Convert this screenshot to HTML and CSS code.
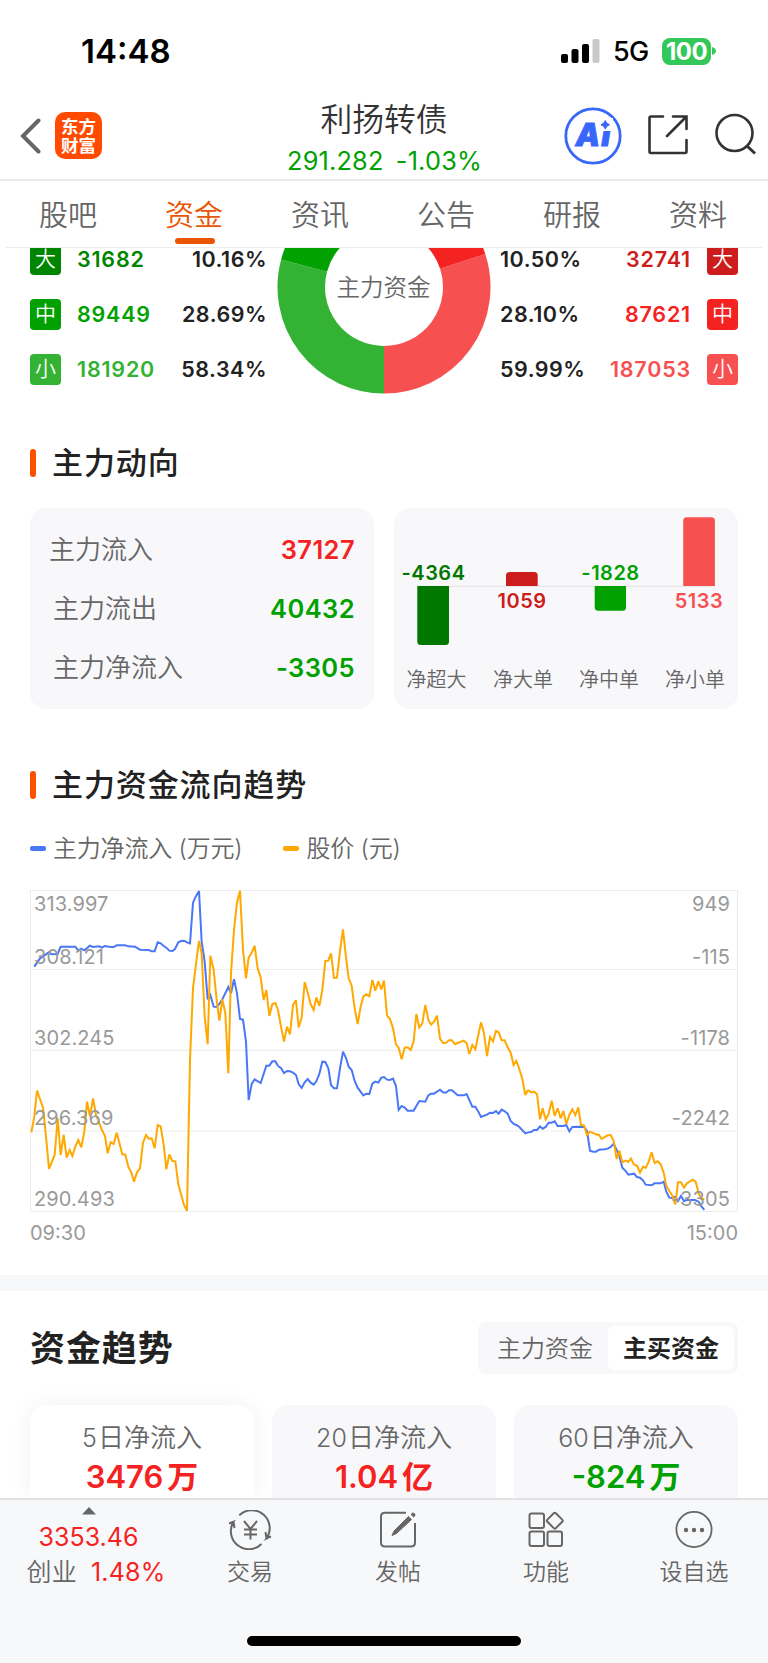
FILE: index.html
```html
<!DOCTYPE html>
<html lang="zh-CN">
<head>
<meta charset="utf-8">
<title>利扬转债 资金</title>
<link rel="stylesheet" href="styles.css">
</head>
<body>
<div class="screen">
  <div class="status">
    <span class="clock">14:48</span>
    <div class="status-right">
      <svg class="signal" width="39" height="24" viewBox="0 0 39 24"><rect x="0" y="15" width="7" height="9" rx="2"/><rect x="10.5" y="10" width="7" height="14" rx="2"/><rect x="21" y="5" width="7" height="19" rx="2"/><rect x="31.500" y="0" width="7" height="24" rx="2" fill="#c9c9c9"/></svg>
      <span class="net">5G</span>
      <span class="battery">100</span>
      <svg class="nub" width="4" height="8" viewBox="0 0 4 8"><path d="M0 0Q4 1.500 4 4T0 8Z" fill="#34c759"/></svg>
    </div>
  </div>

  <header class="header">
    <svg class="back" width="22" height="36" viewBox="0 0 22 36"><path d="M18.500 2.500 3 18l15.500 15.500" fill="none" stroke="#666" stroke-width="4" stroke-linecap="round"/></svg>
    <div class="logo"><span>东方</span><span>财富</span></div>
    <div class="title">
      <div class="name">利扬转债</div>
      <div class="quote"><span>291.282</span><span>-1.03%</span></div>
    </div>
    <div class="actions">
      <svg width="58" height="58" viewBox="0 0 58 58"><circle cx="29" cy="29" r="27.200" fill="none" stroke="#3867fb" stroke-width="2.800"/><text x="11.500" y="39" class="ai">Ai</text><rect x="35" y="11" width="14" height="13" fill="#fff"/><path d="M41.200 13.500Q42.200 16.800 45.500 17.800 42.200 18.800 41.200 22.100 40.200 18.800 36.900 17.800 40.200 16.800 41.200 13.500Z" fill="#3867fb" stroke="#3867fb"/></svg>
      <svg class="share" width="42" height="42" viewBox="0 0 42 42"><path d="M16 2.500H4Q2.500 2.500 2.500 4V37.500Q2.500 39 4 39H38Q39.500 39 39.500 37.500V26M26 2.500H39.500V15M39 3 20 22" fill="none" stroke="#333" stroke-width="2.600" stroke-linecap="round"/></svg>
      <svg class="find" width="42" height="42" viewBox="0 0 42 42"><circle cx="19.500" cy="20" r="18" fill="none" stroke="#333" stroke-width="2.600"/><path d="m31.500 32.500 8.500 8" stroke="#333" stroke-width="3"/></svg>
    </div>
  </header>

  <nav class="tabs">
    <span>股吧</span><span class="on">资金</span><span>资讯</span><span>公告</span><span>研报</span><span>资料</span>
  </nav>

  <section class="flow">
    <div class="orders">
      <i class="tag g1">大</i><b class="t-g1">31682</b><em>10.16%</em>
      <i class="tag g2">中</i><b class="t-g2">89449</b><em>28.69%</em>
      <i class="tag g3">小</i><b class="t-g3">181920</b><em>58.34%</em>
    </div>
    <svg class="donut" width="214" height="147" viewBox="-107 -39 214 147">
      <g fill="none" stroke-width="47.500">
        <path d="M0 82.750A82.750 82.750 0 0 1 -79.930 -21.420" stroke="#33b233"/>
        <path d="M-79.930 -21.420A82.750 82.750 0 0 1 -32.860 -75.940" stroke="#00a100"/>
        <path d="M0 82.750A82.750 82.750 0 0 0 78.700 -25.570" stroke="#f75050"/>
        <path d="M78.700 -25.570A82.750 82.750 0 0 0 30 -77.100" stroke="#f52222"/>
      </g>
      <text x="-.5" y="8.500" text-anchor="middle" class="donut-label">主力资金</text>
    </svg>
    <div class="orders right">
      <em>10.50%</em><b class="t-r1">32741</b><i class="tag r1">大</i>
      <em>28.10%</em><b class="t-r2">87621</b><i class="tag r2">中</i>
      <em>59.99%</em><b class="t-r3">187053</b><i class="tag r3">小</i>
    </div>
  </section>

  <h2 class="sec"><span>主力动向</span></h2>
  <div class="cards">
    <div class="card sums">
      <div class="first"><span>主力流入</span><b class="t-r2">37127</b></div>
      <div><span>主力流出</span><b class="t-g2">40432</b></div>
      <div><span>主力净流入</span><b class="t-g2">-3305</b></div>
    </div>
    <div class="card">
      <svg width="344" height="201" viewBox="0 0 344 201">
        <path d="M23 78.300H321" stroke="#e6e6e9" stroke-width="1.300"/>
        <path d="M23.300 78H55V133.500Q55 137 51.500 137H26.800Q23.300 137 23.300 133.500Z" fill="#007800"/>
        <path d="M112 78V67.500Q112 64 115.500 64H140.200Q143.700 64 143.700 67.500V78Z" fill="#cd1c1c"/>
        <path d="M200.700 78H232V99.300Q232 102.800 228.500 102.800H204.200Q200.700 102.800 200.700 99.300Z" fill="#00a100"/>
        <path d="M289.200 78V12.800Q289.200 9.300 292.700 9.300H317.400Q320.900 9.300 320.900 12.800V78Z" fill="#f75050"/>
        <g class="bar-num" text-anchor="middle">
          <text x="39.500" y="71.800" fill="#007800">-4364</text>
          <text x="128" y="99.500" fill="#cd1c1c">1059</text>
          <text x="216.500" y="71.800" fill="#00a100">-1828</text>
          <text x="305" y="99.500" fill="#f75050">5133</text>
        </g>
        <g class="bar-name" text-anchor="middle">
          <text x="42.500" y="179">净超大</text>
          <text x="129" y="179">净大单</text>
          <text x="215" y="179">净中单</text>
          <text x="301" y="179">净小单</text>
        </g>
      </svg>
    </div>
  </div>

  <h2 class="sec second"><span>主力资金流向趋势</span></h2>
  <div class="legend"><span class="blue"><u>主力净流入 (万元)</u></span><span class="orange"><u>股价 (元)</u></span></div>
  <svg class="chart" width="708" height="323" viewBox="0 0 708 323">
    <path d="M.5 .5H707.500V321.500H.5ZM0 79.500H708M0 160.300H708M0 241H708" fill="none" stroke="#ededee" stroke-width="1.200"/>
    <g transform="scale(.33333)" fill="none" stroke-width="6" stroke-linejoin="miter" stroke-miterlimit="3">
      <g stroke="#4a77f7">
        <polyline transform="translate(-30 -60)" points="43,290 60,265 87,247 95,253 113,252 122,230 166,230 175,242 184,236 193,241 210,227 219,231 237,229 246,233 254,228 272,231 281,231 290,226 316,226 325,229 345,230 360,239 387,240 395,244 404,244 413,217 422,220 431,228 439,233 448,242 457,243 465,237 475,217 483,213 492,212 501,217 510,220 519,98 527,80 537,63 545,215 554,275 563,388 571,375 581,410 590,411 598,402 607,388 625,351 633,370 642,328 651,370 660,447 669,449 678,515 686,690 695,642 704,628 722,639 739,587 748,587 757,574 766,574 774,588"/>
        <polyline transform="translate(720 -60)" points="24,588 33,594 42,609 51,603 60,604 69,608 78,615 86,642 95,654 104,637 113,627 122,638 131,644 139,634 148,612 157,575 166,576 175,595 183,645 192,655 201,655 210,595 219,545 228,564 236,590 245,600 254,633 263,653 280,676 289,671 298,672 307,641 316,635 325,638 334,623 342,621 351,629 360,630 369,626 378,648 386,720 395,708 404,713 413,722 431,722 439,708 448,693 466,695 475,676 483,671 492,671 510,659 519,667 528,668 537,661 546,661 563,676 581,676 590,672 607,710 616,710 625,725 633,741 651,734 660,728 669,729 678,723 686,731 695,719 704,724 713,731 722,753 731,762 739,765 748,771 766,790 774,787"/>
        <polyline transform="translate(1410 -60)" points="84,787 93,786 102,780 111,780 120,769 128,776 137,771 146,758 155,758 164,754 173,768 190,768 199,765 208,784 217,771 235,770 252,771 261,783 270,842 279,845 288,845 297,839 314,838 323,836 332,831 341,821 358,857 367,893 376,902 385,914 402,911 411,921 420,923 429,931 437,944 455,946 464,940 482,940 491,935 499,965 508,983 517,984 526,980 534,993 543,978 552,993 561,990 585,990 596,995 605,1010 613,1020"/>
      </g>
      <g stroke="#ffa800">
        <polyline transform="translate(-30 -60)" points="34,787 43,740 51,662 69,713 78,800 87,897 104,855 113,745 122,855 131,795 140,863 149,840 157,858 166,830 175,810 184,832 193,785 201,695 210,740 219,685 228,735 246,780 255,798 263,850 272,817 281,822 290,788 307,853 316,854 325,890 334,908 342,935 351,907 360,895 369,818 378,795 386,806 395,805 404,835 413,765 422,769 431,823 439,898 448,853 457,873 466,874 475,943 492,1005 501,1022 510,570 519,355 527,290 537,213 545,250 554,440 563,523 571,257 581,300 590,390 598,452 607,388 616,430 625,610 633,310 642,180 651,98 660,62 669,240 678,325 686,263 695,248 704,228 713,295 722,322 731,390 739,360 748,438 757,402 766,399 774,420"/>
        <polyline transform="translate(720 -60)" points="24,420 33,470 42,515 51,470 60,493 69,405 78,391 86,472 95,443 104,336 113,367 122,403 131,420 139,382 148,408 157,360 166,273 175,272 183,250 192,324 201,323 210,243 219,178 228,262 236,325 245,347 254,415 263,462 272,410 280,380 289,373 298,379 307,330 316,362 325,334 334,358 342,332 351,437 360,447 369,475 378,524 386,533 395,568 404,533 413,532 422,540 431,514 439,432 448,473 457,460 466,405 475,450 483,464 492,455 501,437 510,506 519,519 528,518 537,511 546,511 555,523 563,519 581,512 590,520 598,552 607,525 616,538 625,495 633,457 642,490 651,558 660,501 669,514 678,483 686,487 695,511 704,511 713,532 722,548 731,585 739,573 748,597 757,627 766,675 774,660"/>
        <polyline transform="translate(1410 -60)" points="84,660 93,667 102,665 111,672 120,748 128,715 137,748 146,732 155,692 164,738 173,715 182,745 190,723 199,762 208,735 217,718 226,735 235,712 243,765 252,766 261,795 270,785 288,793 297,795 305,807 323,796 332,795 341,812 350,867 358,842 367,877 376,872 385,876 393,866 402,884 411,887 420,908 429,890 437,894 446,875 455,847 464,879 473,874 482,883 491,908 499,948 517,977 526,1003 534,937 543,937 552,953 561,940 578,929 587,935 596,970 605,985 613,988"/>
      </g>
    </g>
    <g class="axis">
      <text x="4" y="20.500">313.997</text><text x="4" y="74">308.121</text><text x="4" y="154.500">302.245</text><text x="4" y="235">296.369</text><text x="4" y="315.500">290.493</text>
      <g text-anchor="end"><text x="700" y="20.500">949</text><text x="700" y="74">-115</text><text x="700" y="154.500">-1178</text><text x="700" y="235">-2242</text><text x="700" y="315.500">-3305</text></g>
    </g>
  </svg>
  <div class="times"><span>09:30</span><span>15:00</span></div>

  <div class="band"></div>

  <div class="trend-head">
    <h1>资金趋势</h1>
    <div class="toggle"><span>主力资金</span><span class="sel">主买资金</span></div>
  </div>
  <div class="periods">
    <div class="period active"><span><u>5</u>日净流入</span><b class="t-r2"><u>3476</u>万</b></div>
    <div class="period"><span><u>20</u>日净流入</span><b class="t-r2"><u>1.04</u>亿</b></div>
    <div class="period"><span><u>60</u>日净流入</span><b class="t-g2"><u>-824</u>万</b></div>
  </div>

  <footer class="bottom">
    <div class="bar">
      <div class="index">
        <svg width="14" height="8" viewBox="0 0 14 8"><path d="M7 0 14 7.500H0Z" fill="#666"/></svg>
        <div class="idx-val">3353.46</div>
        <div class="idx-row"><span>创业</span><span class="t-r2">1.48%</span></div>
      </div>
      <div class="item">
        <svg width="44" height="40" viewBox="0 0 44 40" fill="none" stroke="#666" stroke-width="2"><path d="M11.300 5.200A18 18 0 0 1 38.500 28.500L43 26.300M38.500 28.500 37.500 22M33.500 34A18 18 0 0 1 5.500 11.800L1 13.500M5.500 11.800 6.500 18"/><path d="m16 11 6.500 8 6.500-8M22.500 19V29.500M16 19.500H29M16 24.500H29"/></svg>
        <span>交易</span>
      </div>
      <div class="item">
        <svg width="38" height="40" viewBox="0 0 38 40" fill="none" stroke="#666" stroke-width="2"><path d="M27 2.800H6Q2 2.800 2 6.800V32.500Q2 36.500 6 36.500H32Q36 36.500 36 32.500V13"/><path d="M13 25.500 15 21 29.500 6.500 32.500 9.500 17.500 23.500ZM32 4.500 34 2.800 36.200 4.500 34.800 7Z" fill="#666" stroke-width="1"/></svg>
        <span>发帖</span>
      </div>
      <div class="item">
        <svg width="36" height="40" viewBox="0 0 36 40" fill="none" stroke="#666" stroke-width="2"><rect x="1.500" y="3.500" width="14.500" height="14.500" rx="2"/><rect x="1.500" y="21.500" width="14.500" height="14.500" rx="2"/><rect x="19.500" y="21.500" width="14.500" height="14.500" rx="2"/><rect x="20.800" y="4.700" width="12" height="12" rx="1.500" transform="rotate(45 26.800 10.700)"/></svg>
        <span>功能</span>
      </div>
      <div class="item">
        <svg width="38" height="40" viewBox="0 0 38 40"><circle cx="19" cy="19.500" r="17.600" fill="none" stroke="#666" stroke-width="1.800"/><g fill="#666"><circle cx="11" cy="20" r="2.200"/><circle cx="19" cy="20" r="2.200"/><circle cx="27" cy="20" r="2.200"/></g></svg>
        <span>设自选</span>
      </div>
    </div>
    <div class="home"></div>
  </footer>
</div>
</body>
</html>
```
FILE: styles.css
```css
* { box-sizing: border-box; margin: 0; padding: 0; }
body { width: 768px; height: 1663px; background: #fff; color: #666; font-family: Inter, "Noto Sans CJK SC", sans-serif; overflow: hidden; }
svg { display: block; flex: none; }
i, em { font-style: normal; }
u { text-decoration: none; }
.screen { display: flex; flex-direction: column; width: 768px; height: 1663px; }
.screen > * { flex: none; }

.status { height: 102px; padding: 0 52px 0 81px; display: flex; justify-content: space-between; align-items: center; color: #000; }
.clock { font-size: 33px; font-weight: 600; line-height: 40px; }
.status-right { display: flex; align-items: center; }
.net { margin-left: 13px; font-size: 27px; font-weight: 500; line-height: 32px; width: 36px; padding-top: 2px; letter-spacing: -.8px; }
.battery { margin-left: 13px; width: 49px; height: 27px; border-radius: 8px; background: #34c759; color: #fff; font-size: 24px; font-weight: 700; line-height: 27px; text-align: center; letter-spacing: -.5px; }
.nub { margin-left: 1px; }

.header { height: 79px; border-bottom: 2px solid #ececed; display: flex; align-items: flex-start; padding: 2px 11px 0 20px; }
.back { margin-top: 14px; }
.logo { margin: 8px 0 0 13px; width: 47px; height: 47px; border-radius: 10px; background: #ff4a00; color: #fff; font-size: 17.500px; font-weight: 700; line-height: 19px; display: flex; flex-direction: column; align-items: center; justify-content: center; }
.title { margin-left: 184px; width: 196px; text-align: center; white-space: nowrap; }
.name { color: #333; font-size: 31.800px; font-weight: 350; line-height: 38px; margin-top: -3px; }
.quote { color: #00a100; font-size: 25.300px; line-height: 30px; margin: 7px 0 0 1px; display: flex; justify-content: space-between; letter-spacing: .2px; }
.actions { margin-left: auto; display: flex; }
.actions svg { margin-top: 3px; }
.ai { font-size: 31px; font-weight: 900; font-style: italic; fill: #3867fb; stroke: #3867fb; stroke-width: .8; letter-spacing: 1px; }
.actions .share { margin: 10px 0 0 25px; }
.actions .find { margin: 9px 0 0 26px; }

.tabs { height: 67px; margin: 0 6px; display: grid; grid-template-columns: repeat(6, 126px); border-bottom: 1px solid #ebecef; font-size: 29px; font-weight: 350; line-height: 64px; text-align: center; padding-top: 3px; }
.tabs span { position: relative; height: 63px; left: -1px; }
.tabs .on { color: #ea5504; }
.tabs .on::after { content: ""; position: absolute; left: 44px; bottom: 3px; width: 40px; height: 6px; border-radius: 3px; background: #ea5504; }

.flow { height: 184px; overflow: hidden; display: flex; padding: 0 30px; }
.orders { margin-top: -4px; width: 237px; display: grid; grid-template-columns: 31px 1fr auto; grid-auto-rows: 31px; row-gap: 24px; font-size: 21.500px; line-height: 31px; align-content: start; letter-spacing: .8px; }
.orders b { font-weight: 600; padding-left: 16px; }
.orders em { color: #222; font-weight: 600; letter-spacing: .5px; text-align: right; }
.orders.right { grid-template-columns: auto 1fr 31px; width: 238px; }
.orders.right b { text-align: right; padding: 0 16px 0 0; }
.orders.right em { text-align: left; }
.donut { margin: 0 9px 0 10px; }
.donut-label { font-size: 23.500px; font-weight: 350; fill: #666; }
.tag { border-radius: 4px; color: #fff; text-align: center; font-size: 21px; font-weight: 350; letter-spacing: 0; line-height: 30px; }
.g1 { background: #008500; } .g2 { background: #00a100; } .g3 { background: #33b233; }
.r1 { background: #cd1c1c; } .r2 { background: #f52222; } .r3 { background: #f75050; }
.t-g1 { color: #008500; } .t-g2 { color: #00a100; } .t-g3 { color: #33b233; }
.t-r1 { color: #cd1c1c; } .t-r2 { color: #f52222; } .t-r3 { color: #f75050; }

.sec { height: 62px; padding-left: 30px; display: flex; align-items: center; color: #222; font-size: 31px; font-weight: 500; letter-spacing: .9px; }
.sec span { padding-bottom: 6px; }
.sec::before { content: ""; width: 6px; height: 28px; border-radius: 3px; background: #ff5000; margin-right: 16px; }
.cards { margin: 14px 30px 0; display: grid; grid-template-columns: 344px 344px; gap: 20px; }
.card { height: 201px; border-radius: 16px; background: #f8f8fb; }
.sums { padding: 12px 19px 0 23px; }
.sums div { height: 59px; display: flex; justify-content: space-between; align-items: center; font-size: 26px; font-weight: 350; }
.sums span { padding-bottom: 4px; }
.sums .first span { margin-left: -4px; }
.sums b { font-size: 25.500px; font-weight: 600; letter-spacing: .4px; }
.bar-num { font-size: 20px; font-weight: 600; letter-spacing: .5px; }
.bar-name { font-size: 20px; font-weight: 350; fill: #666; }

.second { margin-top: 45px; }
.legend { height: 64px; padding-left: 30px; display: flex; align-items: center; font-size: 24px; font-weight: 350; letter-spacing: -.2px; }
.legend span { display: flex; align-items: center; white-space: pre; }
.legend u { padding-bottom: 3px; }
.legend span::before { content: ""; width: 16px; height: 5px; border-radius: 2px; background: #4a77f7; margin-right: 7px; }
.legend .orange { margin-left: 41px; }
.legend .orange::before { background: #ffa800; }
.chart { margin: 10px 0 0 30px; }
.axis { font-size: 20px; fill: #999; letter-spacing: .1px; }
.times { margin: 8px 30px 0 30px; height: 24px; display: flex; justify-content: space-between; font-size: 20px; line-height: 24px; color: #999; }
.band { margin-top: 30px; height: 16px; background: #f6f8fa; }

.trend-head { height: 114px; padding: 31px 30px 0; display: flex; justify-content: space-between; }
h1 { color: #222; font-size: 35px; font-weight: 700; line-height: 52px; letter-spacing: .9px; }
.toggle { width: 260px; height: 52px; padding: 4px; border-radius: 8px; background: #f8f8fb; display: flex; font-size: 24px; font-weight: 350; line-height: 45px; text-align: center; }
.toggle span { width: 126px; height: 44px; }
.toggle .sel { background: #fff; border-radius: 6px; color: #222; font-weight: 600; }
.periods { margin: 0 30px; height: 93px; display: grid; grid-template-columns: repeat(3, 224px); justify-content: space-between; }
.period { border-radius: 16px 16px 0 0; background: #f8f8fb; display: flex; flex-direction: column; align-items: center; }
.period span { margin-top: 13px; font-size: 26px; font-weight: 350; line-height: 39px; height: 38px; }
.period span u { font-size: 25px; margin-right: 1px; }
.period b { font-size: 31px; font-weight: 600; line-height: 41px; }
.period u { margin-right: 4px; }
.active { background: #fff; box-shadow: 0 0 22px rgba(0,0,0,.06); }

.bottom { height: 165px; background: #f7f8fa; border-top: 2px solid #e1e2e4; }
.bar { height: 136px; display: flex; }
.index { width: 176px; display: flex; flex-direction: column; align-items: center; padding: 7px 0 0 1px; font-size: 25px; font-weight: 350; }
.index, .idx-row { white-space: nowrap; }
.idx-val { color: #f52222; font-weight: 400; line-height: 30px; margin-top: 7px; }
.idx-row { display: flex; gap: 14px; line-height: 34px; margin-top: 3px; margin-left: 15px; letter-spacing: .2px; }
.idx-row .t-r2 { font-weight: 400; }
.item { width: 148px; display: flex; flex-direction: column; align-items: center; padding-top: 10px; font-size: 23px; font-weight: 350; }
.item span { line-height: 34px; margin-top: 5px; }
.home { width: 274px; height: 10px; border-radius: 5px; background: #000; margin: 0 auto; }
```
